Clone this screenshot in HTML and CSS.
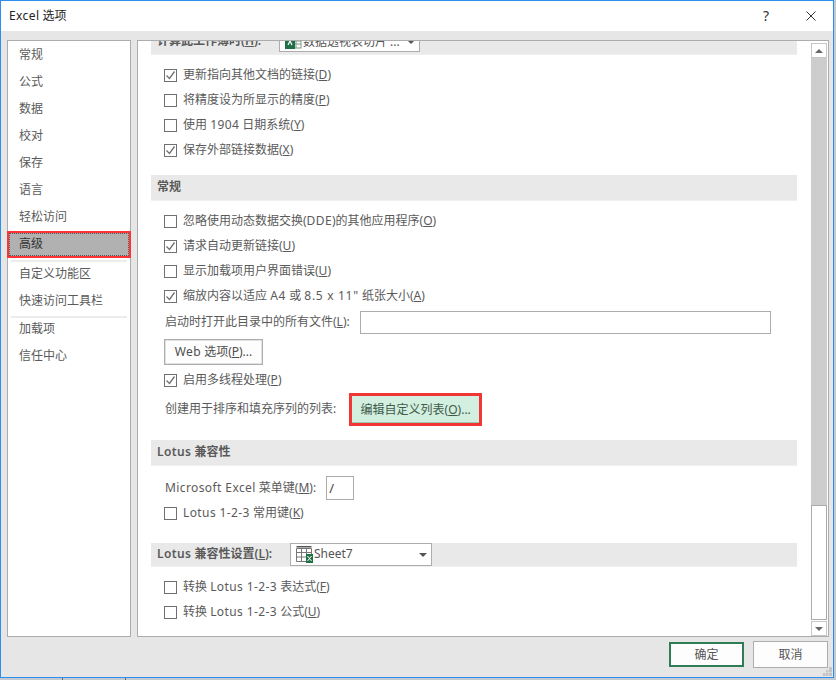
FILE: index.html
```html
<!DOCTYPE html>
<html lang="zh">
<head>
<meta charset="utf-8">
<title>Excel 选项</title>
<link rel="stylesheet" href="styles.css">
</head>
<body>
<div class="dialog">
  <header class="titlebar">
    <span class="title"><span class="lat">Excel</span> 选项</span>
    <span class="help">?</span>
    <svg class="close" width="10" height="10" viewBox="0 0 10 10"><path d="M.5.5l9 9M9.500.5l-9 9" stroke="#333" stroke-width="1" fill="none"/></svg>
  </header>
  <main class="body">
    <nav class="nav">
      <a class="nav-item">常规</a>
      <a class="nav-item">公式</a>
      <a class="nav-item">数据</a>
      <a class="nav-item">校对</a>
      <a class="nav-item">保存</a>
      <a class="nav-item">语言</a>
      <a class="nav-item">轻松访问</a>
      <a class="nav-item selected"><span class="selected-inner">高级</span></a>
      <div class="nav-sep"></div>
      <a class="nav-item">自定义功能区</a>
      <a class="nav-item">快速访问工具栏</a>
      <div class="nav-sep second"></div>
      <a class="nav-item">加载项</a>
      <a class="nav-item">信任中心</a>
    </nav>
    <section class="pane">
      <div class="content">
        <div class="section first">
          <span class="section-label">计算此工作簿时(<u>H</u>):</span>
          <span class="combo combo-book">
            <svg class="combo-icon" width="17" height="16" viewBox="0 0 17 16"><rect x="6" y="1" width="10" height="14" fill="#fff" stroke="#7a9a86"/><path d="M6 5h10M6 8h10M6 11h10M11 1v14" stroke="#7a9a86"/><rect x="0" y="0" width="10" height="16" fill="#1e7145"/><path d="M3 4l4 8M7 4l-4 8" stroke="#fff" stroke-width="1.2"/></svg>
            <span class="combo-text">数据透视表切片 ...</span>
            <i class="arrow"></i>
          </span>
        </div>
        <div class="rows gap-top">
          <label class="row"><span class="cb on"></span>更新指向其他文档的链接(<u>D</u>)</label>
          <label class="row"><span class="cb"></span>将精度设为所显示的精度(<u>P</u>)</label>
          <label class="row"><span class="cb"></span><span>使用 <span class="lat">1904</span> 日期系统(<u>Y</u>)</span></label>
          <label class="row"><span class="cb on"></span>保存外部链接数据(<u>X</u>)</label>
        </div>
        <div class="section s-general"><span class="section-label">常规</span></div>
        <div class="rows gap-top">
          <label class="row"><span class="cb"></span><span>忽略使用动态数据交换(<span class="lat">DDE</span>)的其他应用程序(<u>O</u>)</span></label>
          <label class="row"><span class="cb on"></span>请求自动更新链接(<u>U</u>)</label>
          <label class="row"><span class="cb"></span>显示加载项用户界面错误(<u>U</u>)</label>
          <label class="row"><span class="cb on"></span><span>缩放内容以适应 <span class="lat wide">A4</span> 或 <span class="lat wide">8.5 x 11"</span> 纸张大小(<u>A</u>)</span></label>
        </div>
        <div class="row text-row startup">
          <span>启动时打开此目录中的所有文件(<u>L</u>):</span>
          <span class="input input-path"></span>
        </div>
        <div class="web-wrap"><span class="btn web-btn"><span><span class="lat">Web</span> 选项(<u>P</u>)...</span></span></div>
        <label class="row thread"><span class="cb on"></span>启用多线程处理(<u>P</u>)</label>
        <div class="row text-row custom">
          <span>创建用于排序和填充序列的列表:</span>
          <span class="btn red-btn">编辑自定义列表(<u>O</u>)...</span>
        </div>
        <div class="section s-lotus"><span class="section-label"><span class="lat">Lotus</span> 兼容性</span></div>
        <div class="row text-row menu-key">
          <span class="menu-label"><span class="lat">Microsoft Excel</span> 菜单键(<u>M</u>):</span>
          <span class="input input-key">/</span>
        </div>
        <label class="row"><span class="cb"></span><span><span class="lat">Lotus 1-2-3</span> 常用键(<u>K</u>)</span></label>
        <div class="section s-lotus2">
          <span class="section-label"><span class="lat">Lotus</span> 兼容性设置(<u>L</u>):</span>
          <span class="combo combo-sheet">
            <svg class="combo-icon" width="17" height="17" viewBox="0 0 17 17"><path d="M.5.5h15M.5 2h15" stroke="#555" fill="none"/><path d="M.5 2.500h15v13H.5zM.5 6.500h15M.5 11h15M5.500 2.500v13M10.500 2.500v13" fill="none" stroke="#777"/><rect x="10" y="8" width="7" height="9" fill="#1e7145"/><path d="M11.500 10l4 5M15.500 10l-4 5" stroke="#fff"/></svg>
            <span class="combo-text">Sheet7</span>
            <i class="arrow"></i>
          </span>
        </div>
        <div class="rows gap-top">
          <label class="row"><span class="cb"></span><span>转换 <span class="lat">Lotus 1-2-3</span> 表达式(<u>F</u>)</span></label>
          <label class="row"><span class="cb"></span><span>转换 <span class="lat">Lotus 1-2-3</span> 公式(<u>U</u>)</span></label>
        </div>
      </div>
      <div class="scrollbar">
        <span class="sb-btn"><i class="tri up"></i></span>
        <span class="sb-track"></span>
        <span class="sb-thumb"></span>
        <span class="sb-btn down"><i class="tri dn"></i></span>
      </div>
    </section>
  </main>
  <footer class="footer">
    <span class="btn ok">确定</span>
    <span class="btn cancel">取消</span>
  </footer>
  <svg class="grip" width="9" height="9" viewBox="0 0 9 9"><path d="M6 0h3v3H6zM3 3h2.500v2.500H3zM6 3h3v2.500H6zM0 6h2.500v3H0zM3 6h2.500v3H3zM6 6h3v3H6z" fill="#c4c4c4"/></svg>
</div>
</body>
</html>
```
FILE: styles.css
```css
* { box-sizing: border-box; }
html, body { margin: 0; padding: 0; }
body {
  width: 836px;
  height: 680px;
  overflow: hidden;
  background:
    linear-gradient(#666, #666) 62px 678px / 1px 2px no-repeat,
    linear-gradient(#666, #666) 125px 678px / 1px 2px no-repeat,
    #c3cad2;
  font: 12px/1.2 "Noto Sans", "Noto Sans CJK SC", sans-serif;
  color: #5a5a5a;
}
u { text-underline-offset: 1px; }
.lat { letter-spacing: .4px; }
.lat.wide { letter-spacing: .7px; }
.dialog {
  position: relative;
  width: 834px;
  height: 678px;
  border: 1px solid #2b8ff0;
  background: #e6e6e6;
  display: flex;
  flex-direction: column;
}
.titlebar {
  height: 30px;
  flex: none;
  background: #fff;
  display: flex;
  align-items: center;
  padding-left: 8px;
  color: #222;
}
.title { font-size: 12px; flex: 1; }
.help { font-size: 14px; margin-right: 37px; color: #333; }
.close { margin-right: 17px; }
.body {
  flex: none;
  height: 597px;
  margin-top: 9px;
  padding-left: 6px;
  display: flex;
  gap: 6px;
}
.nav {
  width: 124px;
  flex: none;
  background: #fff;
  border: 1px solid #acacac;
  display: flex;
  flex-direction: column;
}
.nav-item {
  height: 27px;
  padding-left: 11px;
  display: flex;
  align-items: center;
  flex: none;
}
.nav-item:first-child { margin-top: 1px; }
.selected {
  margin: 0 0 0 -1px;
  width: 124px;
  padding: 2px;
  background: #ff3333;
  color: #333;
}
.selected-inner {
  flex: 1;
  height: 100%;
  background: #b1b1b1;
  border: 1px dotted #555;
  padding-left: 9px;
  display: flex;
  align-items: center;
}
.nav-sep { height: 2px; margin: 2px 3px -1px; background: #ececec; flex: none; }
.nav-sep.second { margin: 1px 3px -2px; }
.pane {
  width: 692px;
  flex: none;
  background: #fff;
  border: 1px solid #acacac;
  display: flex;
  overflow: hidden;
}
.content { width: 673px; flex: none; }
.section {
  margin-left: 13px;
  width: 646px;
  height: 26px;
  background: #e9e9e9;
  border-bottom: 1px solid #efefef;
  display: flex;
  align-items: center;
  padding-left: 6px;
  font-weight: 600;
}
.section.first { margin-top: -12px; position: relative; }
.s-general { margin-top: 12px; }
.s-lotus { margin-top: 14px; }
.s-lotus2 { margin-top: 17px; height: 24px; position: relative; }
.section-label { white-space: nowrap; }
.rows { display: flex; flex-direction: column; }
.gap-top { margin-top: 8px; }
.row {
  height: 25px;
  margin-left: 26px;
  display: flex;
  align-items: center;
}
.cb {
  width: 13px;
  height: 13px;
  margin-right: 6px;
  border: 1px solid #707070;
  background: #fff no-repeat center;
  flex: none;
}
.cb.on {
  background-image: url("data:image/svg+xml,%3Csvg xmlns='http://www.w3.org/2000/svg' width='11' height='11'%3E%3Cpath d='M1.500 5.500l3 3 5-7' fill='none' stroke='%23707070' stroke-width='1.300'/%3E%3C/svg%3E");
}
.text-row { margin-left: 27px; }
.startup { margin-top: 1px; }
.input {
  background: #fff;
  border: 1px solid #acacac;
  display: block;
}
.input-path { width: 411px; height: 23px; margin-left: 10px; }
.web-wrap { margin: 4px 0 0 26px; height: 26px; display: flex; }
.btn {
  display: flex;
  align-items: center;
  justify-content: center;
  background: #fdfdfd;
  border: 1px solid #adadad;
}
.web-btn { width: 99px; height: 26px; color: #4e4e4e; box-shadow: inset 0 0 0 .5px #c8c8c8; }
.thread { margin-top: 3px; }
.custom { height: 33px; }
.red-btn {
  width: 133px;
  height: 33px;
  margin-left: 13px;
  padding-top: 1px;
  border: 3px solid #f33535;
  background: #d2efdf;
  box-shadow: inset 0 -1px 0 #9ccbb0;
  color: #3f5a4b;
}
.menu-key { height: 24px; margin-top: 10px; margin-bottom: 1px; }
.menu-label { padding-top: 1px; }
.input-key {
  width: 28px;
  height: 24px;
  margin-left: 10px;
  padding: 4px 0 0 2px;
  color: #444;
  font-size: 13px;
}
.combo {
  display: flex;
  align-items: center;
  background: #fff;
  border: 1px solid #acacac;
  font-weight: 400;
  position: absolute;
}
.combo-book { left: 128px; bottom: 2px; width: 141px; height: 26px; padding-left: 5px; }
.combo-book .combo-icon { margin-top: 4px; }
.combo-book .combo-text { margin-top: 6px; }
.combo-sheet { left: 139px; top: 0; width: 142px; height: 23px; padding-left: 5px; }
.combo-text { flex: 1; margin-left: 1px; color: #555; }
.arrow {
  width: 0;
  height: 0;
  border: 4px solid transparent;
  border-top: 4px solid #555;
  border-bottom: 0;
  margin-right: 4px;
}
.combo-book .arrow { margin-top: 6px; }
.footer {
  display: flex;
  gap: 9px;
  margin-top: 5px;
  padding-left: 668px;
}
.ok { width: 75px; height: 25px; padding-top: 2px; border: 2px solid #2f7d57; color: #555; }
.cancel { width: 75px; height: 27px; margin-top: -1px; padding-top: 1px; color: #555; }
.scrollbar {
  flex: 1;
  display: flex;
  flex-direction: column;
  padding: 2px 1px 2px 0;
}
.sb-btn {
  height: 15px;
  flex: none;
  background: #fff;
  border: 1px solid #c6c6c6;
  display: flex;
  align-items: center;
  justify-content: center;
}
.sb-track { height: 447px; flex: none; background: #cdcdcd; }
.sb-thumb { height: 115px; flex: none; background: #fff; border: 1px solid #ababab; }
.sb-btn.down { margin-top: 1px; }
.tri { width: 0; height: 0; border: 4px solid transparent; }
.tri.up { border-bottom: 4px solid #666; border-top: 0; }
.tri.dn { border-top: 4px solid #666; border-bottom: 0; }
.grip { position: absolute; right: 1px; bottom: 1px; }
```
